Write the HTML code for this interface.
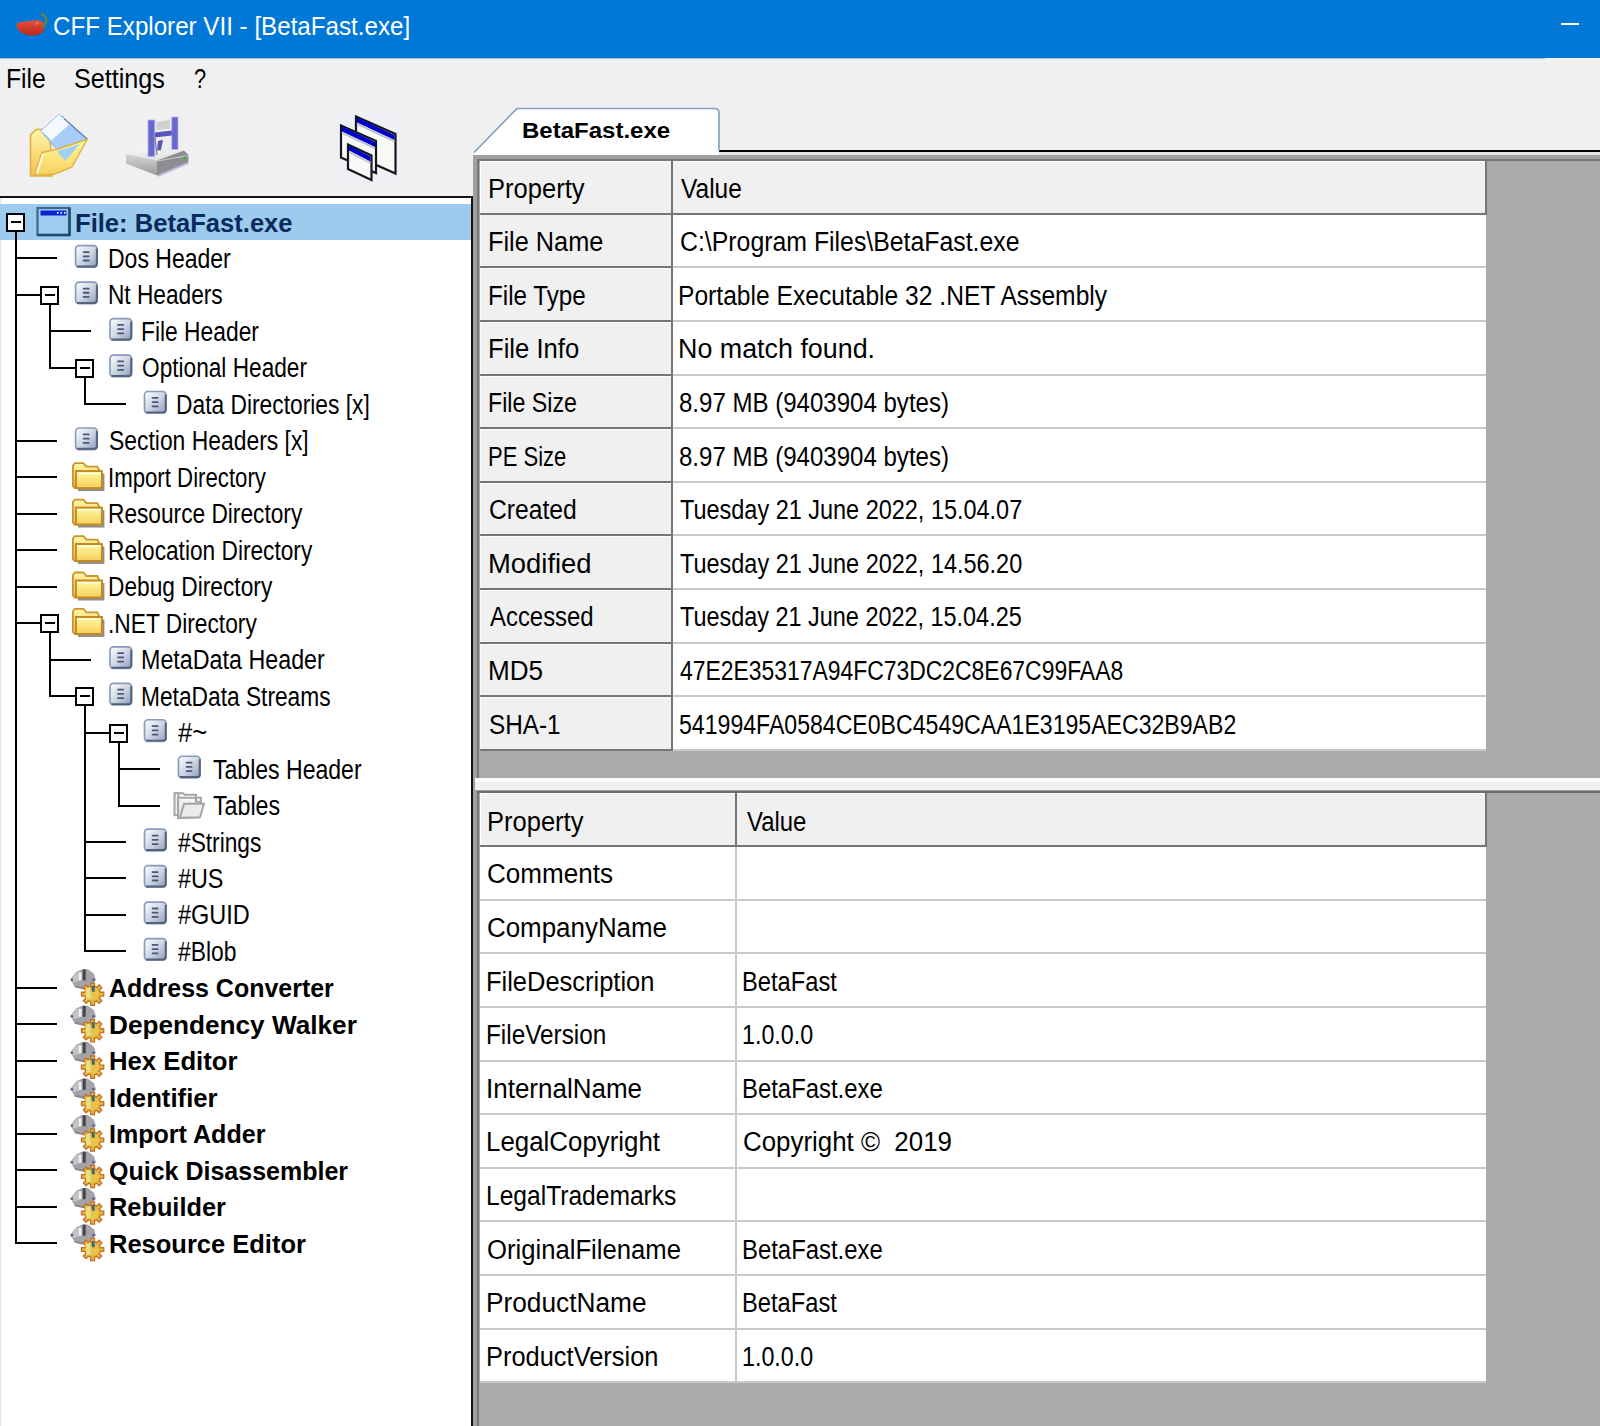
<!DOCTYPE html>
<html><head><meta charset="utf-8"><title>CFF Explorer VII</title>
<style>
html,body{margin:0;padding:0;}
body{width:1600px;height:1426px;overflow:hidden;position:relative;background:#f0f0f0;font-family:"Liberation Sans",sans-serif;}
div,span,svg{position:absolute;box-sizing:border-box;}
span{line-height:1;white-space:pre;transform-origin:0 0;}
</style></head><body>
<div style="left:0px;top:0px;width:1600px;height:58px;background:#0078d7"></div>
<div style="left:0px;top:58px;width:1545px;height:1px;background:#b8bcc8"></div>
<div style="left:0px;top:196px;width:471px;height:1230px;background:#fff"></div>
<div style="left:0px;top:196px;width:473px;height:2px;background:#141414"></div>
<div style="left:471px;top:196px;width:2px;height:1230px;background:#141414"></div>
<div style="left:0px;top:198px;width:1px;height:1228px;background:#e3e3e3"></div>
<div style="left:0px;top:204px;width:471px;height:36px;background:#9ccbee"></div>
<div style="left:719px;top:150px;width:881px;height:2px;background:#000"></div>
<div style="left:719px;top:152px;width:881px;height:3px;background:#e3e3e3"></div>
<div style="left:473px;top:155px;width:1127px;height:1271px;background:#a0a0a0"></div>
<div style="left:477px;top:159px;width:1123px;height:1267px;background:#787878"></div>
<div style="left:479px;top:161px;width:1121px;height:617px;background:#ababab"></div>
<div style="left:479px;top:793px;width:1121px;height:633px;background:#ababab"></div>
<div style="left:475px;top:778px;width:1125px;height:4px;background:#fafafa"></div>
<div style="left:475px;top:782px;width:1125px;height:8px;background:#f0f0f0"></div>
<div style="left:473px;top:790px;width:1127px;height:1px;background:#a0a0a0"></div>
<div style="left:477px;top:791px;width:1123px;height:2px;background:#6e6e6e"></div>
<div style="left:480px;top:215px;width:191px;height:536px;background:#f0f0f0"></div>
<div style="left:671px;top:215px;width:814.5px;height:536px;background:#fff"></div>
<div style="left:480px;top:215px;width:1px;height:534px;background:#fcfcfc"></div>
<div style="left:480px;top:161px;width:1006px;height:52px;background:#f0f0f0"></div>
<div style="left:480px;top:161px;width:1006px;height:1px;background:#fff"></div>
<div style="left:480px;top:161px;width:1px;height:54px;background:#fff"></div>
<div style="left:480px;top:213px;width:1007px;height:2px;background:#767676"></div>
<div style="left:671px;top:161px;width:2px;height:54px;background:#767676"></div>
<div style="left:1485px;top:161px;width:2px;height:54px;background:#767676"></div>
<div style="left:480px;top:266px;width:191px;height:2px;background:#767676"></div>
<div style="left:481px;top:268px;width:190px;height:1px;background:#fcfcfc"></div>
<div style="left:673px;top:266px;width:812.5px;height:2px;background:#c8c8c8"></div>
<div style="left:671px;top:215px;width:2px;height:53px;background:#767676"></div>
<div style="left:480px;top:320px;width:191px;height:2px;background:#767676"></div>
<div style="left:481px;top:322px;width:190px;height:1px;background:#fcfcfc"></div>
<div style="left:673px;top:320px;width:812.5px;height:2px;background:#c8c8c8"></div>
<div style="left:671px;top:268px;width:2px;height:54px;background:#767676"></div>
<div style="left:480px;top:374px;width:191px;height:2px;background:#767676"></div>
<div style="left:481px;top:376px;width:190px;height:1px;background:#fcfcfc"></div>
<div style="left:673px;top:374px;width:812.5px;height:2px;background:#c8c8c8"></div>
<div style="left:671px;top:322px;width:2px;height:54px;background:#767676"></div>
<div style="left:480px;top:427px;width:191px;height:2px;background:#767676"></div>
<div style="left:481px;top:429px;width:190px;height:1px;background:#fcfcfc"></div>
<div style="left:673px;top:427px;width:812.5px;height:2px;background:#c8c8c8"></div>
<div style="left:671px;top:376px;width:2px;height:53px;background:#767676"></div>
<div style="left:480px;top:481px;width:191px;height:2px;background:#767676"></div>
<div style="left:481px;top:483px;width:190px;height:1px;background:#fcfcfc"></div>
<div style="left:673px;top:481px;width:812.5px;height:2px;background:#c8c8c8"></div>
<div style="left:671px;top:429px;width:2px;height:54px;background:#767676"></div>
<div style="left:480px;top:534px;width:191px;height:2px;background:#767676"></div>
<div style="left:481px;top:536px;width:190px;height:1px;background:#fcfcfc"></div>
<div style="left:673px;top:534px;width:812.5px;height:2px;background:#c8c8c8"></div>
<div style="left:671px;top:483px;width:2px;height:53px;background:#767676"></div>
<div style="left:480px;top:588px;width:191px;height:2px;background:#767676"></div>
<div style="left:481px;top:590px;width:190px;height:1px;background:#fcfcfc"></div>
<div style="left:673px;top:588px;width:812.5px;height:2px;background:#c8c8c8"></div>
<div style="left:671px;top:536px;width:2px;height:54px;background:#767676"></div>
<div style="left:480px;top:642px;width:191px;height:2px;background:#767676"></div>
<div style="left:481px;top:644px;width:190px;height:1px;background:#fcfcfc"></div>
<div style="left:673px;top:642px;width:812.5px;height:2px;background:#c8c8c8"></div>
<div style="left:671px;top:590px;width:2px;height:54px;background:#767676"></div>
<div style="left:480px;top:695px;width:191px;height:2px;background:#767676"></div>
<div style="left:481px;top:697px;width:190px;height:1px;background:#fcfcfc"></div>
<div style="left:673px;top:695px;width:812.5px;height:2px;background:#c8c8c8"></div>
<div style="left:671px;top:644px;width:2px;height:53px;background:#767676"></div>
<div style="left:480px;top:749px;width:191px;height:2px;background:#767676"></div>
<div style="left:673px;top:749px;width:812.5px;height:2px;background:#c8c8c8"></div>
<div style="left:671px;top:697px;width:2px;height:54px;background:#767676"></div>
<div style="left:480px;top:847px;width:255px;height:536px;background:#fff"></div>
<div style="left:735px;top:847px;width:750.5px;height:536px;background:#fff"></div>
<div style="left:480px;top:793px;width:1006px;height:52px;background:#f0f0f0"></div>
<div style="left:480px;top:793px;width:1006px;height:1px;background:#fff"></div>
<div style="left:480px;top:793px;width:1px;height:54px;background:#fff"></div>
<div style="left:480px;top:845px;width:1007px;height:2px;background:#767676"></div>
<div style="left:735px;top:793px;width:2px;height:54px;background:#767676"></div>
<div style="left:1485px;top:793px;width:2px;height:54px;background:#767676"></div>
<div style="left:480px;top:899px;width:1005.5px;height:2px;background:#c8c8c8"></div>
<div style="left:735px;top:847px;width:2px;height:52px;background:#c8c8c8"></div>
<div style="left:480px;top:952px;width:1005.5px;height:2px;background:#c8c8c8"></div>
<div style="left:735px;top:901px;width:2px;height:51px;background:#c8c8c8"></div>
<div style="left:480px;top:1006px;width:1005.5px;height:2px;background:#c8c8c8"></div>
<div style="left:735px;top:954px;width:2px;height:52px;background:#c8c8c8"></div>
<div style="left:480px;top:1060px;width:1005.5px;height:2px;background:#c8c8c8"></div>
<div style="left:735px;top:1008px;width:2px;height:52px;background:#c8c8c8"></div>
<div style="left:480px;top:1113px;width:1005.5px;height:2px;background:#c8c8c8"></div>
<div style="left:735px;top:1062px;width:2px;height:51px;background:#c8c8c8"></div>
<div style="left:480px;top:1167px;width:1005.5px;height:2px;background:#c8c8c8"></div>
<div style="left:735px;top:1115px;width:2px;height:52px;background:#c8c8c8"></div>
<div style="left:480px;top:1220px;width:1005.5px;height:2px;background:#c8c8c8"></div>
<div style="left:735px;top:1169px;width:2px;height:51px;background:#c8c8c8"></div>
<div style="left:480px;top:1274px;width:1005.5px;height:2px;background:#c8c8c8"></div>
<div style="left:735px;top:1222px;width:2px;height:52px;background:#c8c8c8"></div>
<div style="left:480px;top:1328px;width:1005.5px;height:2px;background:#c8c8c8"></div>
<div style="left:735px;top:1276px;width:2px;height:52px;background:#c8c8c8"></div>
<div style="left:480px;top:1381px;width:1005.5px;height:2px;background:#c8c8c8"></div>
<div style="left:735px;top:1330px;width:2px;height:51px;background:#c8c8c8"></div>
<div style="left:15px;top:231px;width:2px;height:1013px;background:#000"></div>
<div style="left:49px;top:304px;width:2px;height:65px;background:#000"></div>
<div style="left:84px;top:377px;width:2px;height:28px;background:#000"></div>
<div style="left:49px;top:632px;width:2px;height:65px;background:#000"></div>
<div style="left:84px;top:705px;width:2px;height:247px;background:#000"></div>
<div style="left:118px;top:742px;width:2px;height:65px;background:#000"></div>
<div style="left:15px;top:257px;width:42px;height:2px;background:#000"></div>
<div style="left:15px;top:294px;width:42px;height:2px;background:#000"></div>
<div style="left:49px;top:330px;width:42px;height:2px;background:#000"></div>
<div style="left:49px;top:367px;width:42px;height:2px;background:#000"></div>
<div style="left:84px;top:403px;width:42px;height:2px;background:#000"></div>
<div style="left:15px;top:440px;width:42px;height:2px;background:#000"></div>
<div style="left:15px;top:476px;width:42px;height:2px;background:#000"></div>
<div style="left:15px;top:513px;width:42px;height:2px;background:#000"></div>
<div style="left:15px;top:549px;width:42px;height:2px;background:#000"></div>
<div style="left:15px;top:586px;width:42px;height:2px;background:#000"></div>
<div style="left:15px;top:622px;width:42px;height:2px;background:#000"></div>
<div style="left:49px;top:659px;width:42px;height:2px;background:#000"></div>
<div style="left:49px;top:695px;width:42px;height:2px;background:#000"></div>
<div style="left:84px;top:732px;width:42px;height:2px;background:#000"></div>
<div style="left:118px;top:768px;width:42px;height:2px;background:#000"></div>
<div style="left:118px;top:805px;width:42px;height:2px;background:#000"></div>
<div style="left:84px;top:841px;width:42px;height:2px;background:#000"></div>
<div style="left:84px;top:877px;width:42px;height:2px;background:#000"></div>
<div style="left:84px;top:914px;width:42px;height:2px;background:#000"></div>
<div style="left:84px;top:950px;width:42px;height:2px;background:#000"></div>
<div style="left:15px;top:987px;width:42px;height:2px;background:#000"></div>
<div style="left:15px;top:1023px;width:42px;height:2px;background:#000"></div>
<div style="left:15px;top:1060px;width:42px;height:2px;background:#000"></div>
<div style="left:15px;top:1096px;width:42px;height:2px;background:#000"></div>
<div style="left:15px;top:1133px;width:42px;height:2px;background:#000"></div>
<div style="left:15px;top:1169px;width:42px;height:2px;background:#000"></div>
<div style="left:15px;top:1206px;width:42px;height:2px;background:#000"></div>
<div style="left:15px;top:1242px;width:42px;height:2px;background:#000"></div>
<div style="left:6px;top:213px;width:19px;height:19px;background:#fff;border:2px solid #000"></div>
<div style="left:11px;top:221px;width:10px;height:2px;background:#000"></div>
<div style="left:40px;top:286px;width:19px;height:19px;background:#fff;border:2px solid #000"></div>
<div style="left:45px;top:294px;width:10px;height:2px;background:#000"></div>
<div style="left:75px;top:359px;width:19px;height:19px;background:#fff;border:2px solid #000"></div>
<div style="left:80px;top:367px;width:10px;height:2px;background:#000"></div>
<div style="left:40px;top:614px;width:19px;height:19px;background:#fff;border:2px solid #000"></div>
<div style="left:45px;top:622px;width:10px;height:2px;background:#000"></div>
<div style="left:75px;top:687px;width:19px;height:19px;background:#fff;border:2px solid #000"></div>
<div style="left:80px;top:695px;width:10px;height:2px;background:#000"></div>
<div style="left:109px;top:724px;width:19px;height:19px;background:#fff;border:2px solid #000"></div>
<div style="left:114px;top:732px;width:10px;height:2px;background:#000"></div>
<svg style="left:0;top:0" width="1600" height="1426" viewBox="0 0 1600 1426">
<defs>
 <linearGradient id="docg" x1="0" y1="0" x2="1" y2="1"><stop offset="0" stop-color="#ffffff"/><stop offset="0.55" stop-color="#c9d1e0"/><stop offset="1" stop-color="#8e9cba"/></linearGradient>
 <linearGradient id="foldg" x1="0" y1="0" x2="0" y2="1"><stop offset="0" stop-color="#fffaa0"/><stop offset="1" stop-color="#f7cf5c"/></linearGradient>
 <linearGradient id="foldb" x1="0" y1="0" x2="0" y2="1"><stop offset="0" stop-color="#fff7a8"/><stop offset="1" stop-color="#f5c050"/></linearGradient>
 <linearGradient id="grayf" x1="0" y1="0" x2="0" y2="1"><stop offset="0" stop-color="#f6f6f6"/><stop offset="1" stop-color="#dcdcdc"/></linearGradient>
 <linearGradient id="blueg" x1="0" y1="0" x2="1" y2="1"><stop offset="0" stop-color="#ffffff"/><stop offset="1" stop-color="#8fbdf5"/></linearGradient>
 <linearGradient id="chili" x1="0" y1="0" x2="0" y2="1"><stop offset="0" stop-color="#e8503c"/><stop offset="1" stop-color="#b8261a"/></linearGradient>
 
 
 
 
</defs>
<path d="M16.5,25 C17,21.5 25,21.5 34,20.5 C40,19.5 44.5,21 44.5,27 C44.5,33 39,35.5 32,35.5 C24,35.5 16.5,31 16.5,25 Z" fill="url(#chili)"/>
<path d="M42,27 C47,24 49,18 41,13.5" fill="none" stroke="#5a8a3a" stroke-width="2.4"/>
<ellipse cx="37" cy="23.5" rx="2" ry="1.3" fill="#f08070" opacity=".7"/>
<rect x="1561" y="23" width="18" height="2" fill="#fff"/>
<path d="M30.5,135 L36,129.5 L45,129.5 L50,134 L52,176 L30.5,176 Z" fill="url(#foldb)" stroke="#deb040" stroke-width="1.6"/>
<path d="M41,131 L59,114.5 L87,139 L56,148 Z" fill="url(#blueg)" stroke="#8ab4e8" stroke-width="1.2"/>
<path d="M57,116 L64,116 L60,120 Z" fill="#3a9af5"/>
<path d="M41,131 L59,114.5 L70,124 L52,140 Z" fill="#f4f8ff"/>
<path d="M52,140 L70,124 L87,139 L56,148 Z" fill="#a9cdf9"/>
<path d="M64,118.5 L87,139" stroke="#6a88a8" stroke-width="1.5"/>
<path d="M42,152.5 L58,149 L87,139.5 L72,167 L55,174 L34.5,175.5 Z" fill="url(#foldg)" stroke="#e0b444" stroke-width="1.5"/>
<path d="M57,151 L80,144 L65,161 Z" fill="#9fd0f8"/>
<path d="M43,154 L37,173" stroke="#fffce0" stroke-width="2"/>
<defs><linearGradient id="drvtop" x1="0" y1="0" x2="0.3" y2="1"><stop offset="0" stop-color="#fafafa"/><stop offset="1" stop-color="#e2e2e2"/></linearGradient><linearGradient id="drvl" x1="0" y1="0" x2="0" y2="1"><stop offset="0" stop-color="#d8d8d8"/><stop offset="1" stop-color="#9a9a9a"/></linearGradient></defs>
<path d="M126,154 L148,146.5 L184,150.5 L157,160.5 Z" fill="url(#drvtop)"/>
<path d="M126,154 L157,160.5 L157,175.5 L126,163.5 Z" fill="url(#drvl)"/>
<path d="M157,160.5 L184,150.5 L188.5,155 L188.5,162 L157,175.5 Z" fill="#8e8e92"/>
<path d="M157,161 L188.5,155.5" stroke="#c8c8c8" stroke-width="1.2"/>
<path d="M158,176 L188.5,163" stroke="#a8a8e0" stroke-width="1.5" opacity=".8"/>
<circle cx="185" cy="158" r="1.4" fill="#40b030"/>
<path d="M148,120 L178,116.5 L178,150 L155,156.5 L148,156.5 Z" fill="#ededed"/>
<rect x="148" y="120" width="6.8" height="36.5" fill="#6a68cc" stroke="#b0b0ff" stroke-width=".8"/>
<rect x="171.8" y="117" width="6.2" height="32.5" fill="#6a68cc" stroke="#b0b0ff" stroke-width=".8"/>
<path d="M154.8,132.5 L171.8,130.5 L171.8,135.5 L154.8,137.5 Z" fill="#5856bc"/>
<path d="M158,141 L163,139.8 L161,150 L157,150.5 Z" fill="#5856bc"/>
<path d="M156.5,122 L170,120 L170,128.5 L156.5,130 Z" fill="#d0d0d0"/>
<path d="M155,138 L157,155" stroke="#505050" stroke-width="1.2" opacity=".7"/>
<rect x="333.5" y="113.5" width="69.5" height="69" fill="#eef0f6"/>
<path d="M356,116.5 L395.5,134 L395.5,173.5 L356,156.0 Z" fill="#f8faf8" stroke="#16181c" stroke-width="2.2"/><path d="M357,117.5 L394.5,135 L394.5,140 L357,122.5 Z" fill="#0000cc"/><path d="M357,124.0 L394.5,141.5" stroke="#c0c0c0" stroke-width="1.6"/>
<path d="M341,125.5 L376,141 L376,173 L341,157.5 Z" fill="#f8faf8" stroke="#16181c" stroke-width="2.2"/><path d="M342,126.5 L375,142 L375,147 L342,131.5 Z" fill="#0000cc"/><path d="M342,133.0 L375,148.5" stroke="#c0c0c0" stroke-width="1.6"/>
<path d="M348,144.5 L371.5,155.5 L371.5,180.0 L348,169.0 Z" fill="#f8faf8" stroke="#16181c" stroke-width="2.2"/><path d="M349,145.5 L370.5,156.5 L370.5,161.5 L349,150.5 Z" fill="#0000cc"/><path d="M349,152.0 L370.5,163.0" stroke="#c0c0c0" stroke-width="1.6"/>
<path d="M474,155 L474,152.5 L517,108.5 L714.5,108.5 Q719,108.5 719,113 L719,155 Z" fill="#fff"/>
<path d="M474,152.5 L517,108.5 L714.5,108.5 Q719,108.5 719,113 L719,151" fill="none" stroke="#7e9fc0" stroke-width="1.6"/>
<rect x="37.5" y="208" width="32" height="27" fill="#9fcbee" stroke="#3a6890" stroke-width="2.2"/>
<path d="M37.5,235 L69.5,235 L69.5,208" fill="none" stroke="#1e4a70" stroke-width="2.4"/>
<rect x="40.5" y="210.5" width="26" height="5" fill="#0a24d2"/>
<rect x="57" y="212" width="1.6" height="1.6" fill="#fff"/>
<rect x="60.5" y="212" width="1.6" height="1.6" fill="#fff"/>
<rect x="64" y="212" width="1.6" height="1.6" fill="#fff"/>
<g transform="translate(74.60,244.67) scale(0.9833,0.9833)">
  <rect x="1" y="1" width="22" height="22" rx="3.5" fill="url(#docg)" stroke="#8a9aba" stroke-width="1.7"/>
  <path d="M2.5,22.2 L20,22.2 Q22.6,22.2 22.6,19.5 L22.6,4" fill="none" stroke="#52627f" stroke-width="2"/>
  <rect x="8.3" y="6.6" width="7" height="1.8" rx=".9" fill="#4a5878"/>
  <rect x="8.3" y="10.9" width="7" height="1.8" rx=".9" fill="#4a5878"/>
  <rect x="8.3" y="15.2" width="7" height="1.8" rx=".9" fill="#4a5878"/>
 </g>
<g transform="translate(74.60,281.14) scale(0.9833,0.9833)">
  <rect x="1" y="1" width="22" height="22" rx="3.5" fill="url(#docg)" stroke="#8a9aba" stroke-width="1.7"/>
  <path d="M2.5,22.2 L20,22.2 Q22.6,22.2 22.6,19.5 L22.6,4" fill="none" stroke="#52627f" stroke-width="2"/>
  <rect x="8.3" y="6.6" width="7" height="1.8" rx=".9" fill="#4a5878"/>
  <rect x="8.3" y="10.9" width="7" height="1.8" rx=".9" fill="#4a5878"/>
  <rect x="8.3" y="15.2" width="7" height="1.8" rx=".9" fill="#4a5878"/>
 </g>
<g transform="translate(109.00,317.61) scale(0.9833,0.9833)">
  <rect x="1" y="1" width="22" height="22" rx="3.5" fill="url(#docg)" stroke="#8a9aba" stroke-width="1.7"/>
  <path d="M2.5,22.2 L20,22.2 Q22.6,22.2 22.6,19.5 L22.6,4" fill="none" stroke="#52627f" stroke-width="2"/>
  <rect x="8.3" y="6.6" width="7" height="1.8" rx=".9" fill="#4a5878"/>
  <rect x="8.3" y="10.9" width="7" height="1.8" rx=".9" fill="#4a5878"/>
  <rect x="8.3" y="15.2" width="7" height="1.8" rx=".9" fill="#4a5878"/>
 </g>
<g transform="translate(109.00,354.08) scale(0.9833,0.9833)">
  <rect x="1" y="1" width="22" height="22" rx="3.5" fill="url(#docg)" stroke="#8a9aba" stroke-width="1.7"/>
  <path d="M2.5,22.2 L20,22.2 Q22.6,22.2 22.6,19.5 L22.6,4" fill="none" stroke="#52627f" stroke-width="2"/>
  <rect x="8.3" y="6.6" width="7" height="1.8" rx=".9" fill="#4a5878"/>
  <rect x="8.3" y="10.9" width="7" height="1.8" rx=".9" fill="#4a5878"/>
  <rect x="8.3" y="15.2" width="7" height="1.8" rx=".9" fill="#4a5878"/>
 </g>
<g transform="translate(143.50,390.55) scale(0.9833,0.9833)">
  <rect x="1" y="1" width="22" height="22" rx="3.5" fill="url(#docg)" stroke="#8a9aba" stroke-width="1.7"/>
  <path d="M2.5,22.2 L20,22.2 Q22.6,22.2 22.6,19.5 L22.6,4" fill="none" stroke="#52627f" stroke-width="2"/>
  <rect x="8.3" y="6.6" width="7" height="1.8" rx=".9" fill="#4a5878"/>
  <rect x="8.3" y="10.9" width="7" height="1.8" rx=".9" fill="#4a5878"/>
  <rect x="8.3" y="15.2" width="7" height="1.8" rx=".9" fill="#4a5878"/>
 </g>
<g transform="translate(74.60,427.02) scale(0.9833,0.9833)">
  <rect x="1" y="1" width="22" height="22" rx="3.5" fill="url(#docg)" stroke="#8a9aba" stroke-width="1.7"/>
  <path d="M2.5,22.2 L20,22.2 Q22.6,22.2 22.6,19.5 L22.6,4" fill="none" stroke="#52627f" stroke-width="2"/>
  <rect x="8.3" y="6.6" width="7" height="1.8" rx=".9" fill="#4a5878"/>
  <rect x="8.3" y="10.9" width="7" height="1.8" rx=".9" fill="#4a5878"/>
  <rect x="8.3" y="15.2" width="7" height="1.8" rx=".9" fill="#4a5878"/>
 </g>
<g transform="translate(70.40,461.59) scale(1.0000,1.0000)">
  <path d="M2.5,4 L4.5,1.5 L13,1.5 L16,5 L27,5 L28.5,8 L28.5,12 L4.5,26.5 L2.5,24.5 Z" fill="url(#foldb)" stroke="#c9952c" stroke-width="1.8"/>
  <rect x="7.5" y="12" width="26.5" height="17.5" fill="#444" opacity=".6"/>
  <rect x="5.5" y="9.5" width="26" height="17" fill="url(#foldg)" stroke="#c48a22" stroke-width="2"/>
  <rect x="6.5" y="11" width="24" height="1.5" fill="#fffde8"/>
 </g>
<g transform="translate(70.40,498.06) scale(1.0000,1.0000)">
  <path d="M2.5,4 L4.5,1.5 L13,1.5 L16,5 L27,5 L28.5,8 L28.5,12 L4.5,26.5 L2.5,24.5 Z" fill="url(#foldb)" stroke="#c9952c" stroke-width="1.8"/>
  <rect x="7.5" y="12" width="26.5" height="17.5" fill="#444" opacity=".6"/>
  <rect x="5.5" y="9.5" width="26" height="17" fill="url(#foldg)" stroke="#c48a22" stroke-width="2"/>
  <rect x="6.5" y="11" width="24" height="1.5" fill="#fffde8"/>
 </g>
<g transform="translate(70.40,534.53) scale(1.0000,1.0000)">
  <path d="M2.5,4 L4.5,1.5 L13,1.5 L16,5 L27,5 L28.5,8 L28.5,12 L4.5,26.5 L2.5,24.5 Z" fill="url(#foldb)" stroke="#c9952c" stroke-width="1.8"/>
  <rect x="7.5" y="12" width="26.5" height="17.5" fill="#444" opacity=".6"/>
  <rect x="5.5" y="9.5" width="26" height="17" fill="url(#foldg)" stroke="#c48a22" stroke-width="2"/>
  <rect x="6.5" y="11" width="24" height="1.5" fill="#fffde8"/>
 </g>
<g transform="translate(70.40,571.00) scale(1.0000,1.0000)">
  <path d="M2.5,4 L4.5,1.5 L13,1.5 L16,5 L27,5 L28.5,8 L28.5,12 L4.5,26.5 L2.5,24.5 Z" fill="url(#foldb)" stroke="#c9952c" stroke-width="1.8"/>
  <rect x="7.5" y="12" width="26.5" height="17.5" fill="#444" opacity=".6"/>
  <rect x="5.5" y="9.5" width="26" height="17" fill="url(#foldg)" stroke="#c48a22" stroke-width="2"/>
  <rect x="6.5" y="11" width="24" height="1.5" fill="#fffde8"/>
 </g>
<g transform="translate(70.40,607.47) scale(1.0000,1.0000)">
  <path d="M2.5,4 L4.5,1.5 L13,1.5 L16,5 L27,5 L28.5,8 L28.5,12 L4.5,26.5 L2.5,24.5 Z" fill="url(#foldb)" stroke="#c9952c" stroke-width="1.8"/>
  <rect x="7.5" y="12" width="26.5" height="17.5" fill="#444" opacity=".6"/>
  <rect x="5.5" y="9.5" width="26" height="17" fill="url(#foldg)" stroke="#c48a22" stroke-width="2"/>
  <rect x="6.5" y="11" width="24" height="1.5" fill="#fffde8"/>
 </g>
<g transform="translate(109.00,645.84) scale(0.9833,0.9833)">
  <rect x="1" y="1" width="22" height="22" rx="3.5" fill="url(#docg)" stroke="#8a9aba" stroke-width="1.7"/>
  <path d="M2.5,22.2 L20,22.2 Q22.6,22.2 22.6,19.5 L22.6,4" fill="none" stroke="#52627f" stroke-width="2"/>
  <rect x="8.3" y="6.6" width="7" height="1.8" rx=".9" fill="#4a5878"/>
  <rect x="8.3" y="10.9" width="7" height="1.8" rx=".9" fill="#4a5878"/>
  <rect x="8.3" y="15.2" width="7" height="1.8" rx=".9" fill="#4a5878"/>
 </g>
<g transform="translate(109.00,682.31) scale(0.9833,0.9833)">
  <rect x="1" y="1" width="22" height="22" rx="3.5" fill="url(#docg)" stroke="#8a9aba" stroke-width="1.7"/>
  <path d="M2.5,22.2 L20,22.2 Q22.6,22.2 22.6,19.5 L22.6,4" fill="none" stroke="#52627f" stroke-width="2"/>
  <rect x="8.3" y="6.6" width="7" height="1.8" rx=".9" fill="#4a5878"/>
  <rect x="8.3" y="10.9" width="7" height="1.8" rx=".9" fill="#4a5878"/>
  <rect x="8.3" y="15.2" width="7" height="1.8" rx=".9" fill="#4a5878"/>
 </g>
<g transform="translate(143.50,718.78) scale(0.9833,0.9833)">
  <rect x="1" y="1" width="22" height="22" rx="3.5" fill="url(#docg)" stroke="#8a9aba" stroke-width="1.7"/>
  <path d="M2.5,22.2 L20,22.2 Q22.6,22.2 22.6,19.5 L22.6,4" fill="none" stroke="#52627f" stroke-width="2"/>
  <rect x="8.3" y="6.6" width="7" height="1.8" rx=".9" fill="#4a5878"/>
  <rect x="8.3" y="10.9" width="7" height="1.8" rx=".9" fill="#4a5878"/>
  <rect x="8.3" y="15.2" width="7" height="1.8" rx=".9" fill="#4a5878"/>
 </g>
<g transform="translate(177.50,755.25) scale(0.9833,0.9833)">
  <rect x="1" y="1" width="22" height="22" rx="3.5" fill="url(#docg)" stroke="#8a9aba" stroke-width="1.7"/>
  <path d="M2.5,22.2 L20,22.2 Q22.6,22.2 22.6,19.5 L22.6,4" fill="none" stroke="#52627f" stroke-width="2"/>
  <rect x="8.3" y="6.6" width="7" height="1.8" rx=".9" fill="#4a5878"/>
  <rect x="8.3" y="10.9" width="7" height="1.8" rx=".9" fill="#4a5878"/>
  <rect x="8.3" y="15.2" width="7" height="1.8" rx=".9" fill="#4a5878"/>
 </g>
<g transform="translate(173.00,791.72) scale(1.0000,1.0000)">
  <path d="M1.5,1.5 L10,1.5 L11.5,3 L23,3 L23,6 L28,6 L28,11" fill="none" stroke="#a6a6a6" stroke-width="2"/>
  <rect x="1.5" y="1.5" width="4" height="22" fill="#f2f2f2" stroke="#a6a6a6" stroke-width="2"/>
  <path d="M5,6 L23,6 L23,10 L28,10 L28,18 L26,25.5 L5,26.5 Z" fill="url(#grayf)" stroke="#a6a6a6" stroke-width="2"/>
  <path d="M7,26 L11,12 L31,12 L27,25.5 Z" fill="#ebebeb" stroke="#a6a6a6" stroke-width="2"/>
 </g>
<g transform="translate(143.50,828.19) scale(0.9833,0.9833)">
  <rect x="1" y="1" width="22" height="22" rx="3.5" fill="url(#docg)" stroke="#8a9aba" stroke-width="1.7"/>
  <path d="M2.5,22.2 L20,22.2 Q22.6,22.2 22.6,19.5 L22.6,4" fill="none" stroke="#52627f" stroke-width="2"/>
  <rect x="8.3" y="6.6" width="7" height="1.8" rx=".9" fill="#4a5878"/>
  <rect x="8.3" y="10.9" width="7" height="1.8" rx=".9" fill="#4a5878"/>
  <rect x="8.3" y="15.2" width="7" height="1.8" rx=".9" fill="#4a5878"/>
 </g>
<g transform="translate(143.50,864.66) scale(0.9833,0.9833)">
  <rect x="1" y="1" width="22" height="22" rx="3.5" fill="url(#docg)" stroke="#8a9aba" stroke-width="1.7"/>
  <path d="M2.5,22.2 L20,22.2 Q22.6,22.2 22.6,19.5 L22.6,4" fill="none" stroke="#52627f" stroke-width="2"/>
  <rect x="8.3" y="6.6" width="7" height="1.8" rx=".9" fill="#4a5878"/>
  <rect x="8.3" y="10.9" width="7" height="1.8" rx=".9" fill="#4a5878"/>
  <rect x="8.3" y="15.2" width="7" height="1.8" rx=".9" fill="#4a5878"/>
 </g>
<g transform="translate(143.50,901.13) scale(0.9833,0.9833)">
  <rect x="1" y="1" width="22" height="22" rx="3.5" fill="url(#docg)" stroke="#8a9aba" stroke-width="1.7"/>
  <path d="M2.5,22.2 L20,22.2 Q22.6,22.2 22.6,19.5 L22.6,4" fill="none" stroke="#52627f" stroke-width="2"/>
  <rect x="8.3" y="6.6" width="7" height="1.8" rx=".9" fill="#4a5878"/>
  <rect x="8.3" y="10.9" width="7" height="1.8" rx=".9" fill="#4a5878"/>
  <rect x="8.3" y="15.2" width="7" height="1.8" rx=".9" fill="#4a5878"/>
 </g>
<g transform="translate(143.50,937.60) scale(0.9833,0.9833)">
  <rect x="1" y="1" width="22" height="22" rx="3.5" fill="url(#docg)" stroke="#8a9aba" stroke-width="1.7"/>
  <path d="M2.5,22.2 L20,22.2 Q22.6,22.2 22.6,19.5 L22.6,4" fill="none" stroke="#52627f" stroke-width="2"/>
  <rect x="8.3" y="6.6" width="7" height="1.8" rx=".9" fill="#4a5878"/>
  <rect x="8.3" y="10.9" width="7" height="1.8" rx=".9" fill="#4a5878"/>
  <rect x="8.3" y="15.2" width="7" height="1.8" rx=".9" fill="#4a5878"/>
 </g>
<g transform="translate(70.40,968.87) scale(1.0000,1.0000)">
  <path d="M0,10.5 L6,3 L12,0.3 L17.5,0.3 L23.5,5 L25.5,11 L21,17.5 L13,19.8 L4.5,18.3 Z" fill="#a4a4a8"/>
  <path d="M1,11 L6,4 L9,3 L9.5,12 L3,14 Z" fill="#c4c4c4"/>
  <rect x="8.5" y="3.5" width="2.6" height="8" fill="#f2f2ea"/>
  <rect x="12.3" y="0.5" width="3" height="11" fill="#44444c"/>
  <path d="M4.5,17.5 L13,19.5 L21,17.3" fill="none" stroke="#8a8a90" stroke-width="2"/>
  <circle cx="1.5" cy="11" r="1.3" fill="#5a5a90"/>
  <circle cx="23" cy="11" r="1.3" fill="#5a5a90"/>
  <path d="M29.97,23.40 L33.34,23.39 L33.34,27.21 L29.97,27.20 L29.04,29.45 L31.43,31.82 L28.72,34.53 L26.35,32.14 L24.10,33.07 L24.11,36.44 L20.29,36.44 L20.30,33.07 L18.05,32.14 L15.68,34.53 L12.97,31.82 L15.36,29.45 L14.43,27.20 L11.06,27.21 L11.06,23.39 L14.43,23.40 L15.36,21.15 L12.97,18.78 L15.68,16.07 L18.05,18.46 L20.30,17.53 L20.29,14.16 L24.11,14.16 L24.10,17.53 L26.35,18.46 L28.72,16.07 L31.43,18.78 L29.04,21.15 Z" fill="#e2b83c" stroke="#c66e24" stroke-width="1.3"/>
  <circle cx="22.2" cy="25.3" r="6.2" fill="#e8c24a"/>
  <path d="M15,20 L19.5,18 L20.5,30 L16,31 Z" fill="#e8e080"/>
  <path d="M21,17 L24,17 L24.5,23 L21.5,23 Z" fill="#3f6a70"/>
 </g>
<g transform="translate(70.40,1005.34) scale(1.0000,1.0000)">
  <path d="M0,10.5 L6,3 L12,0.3 L17.5,0.3 L23.5,5 L25.5,11 L21,17.5 L13,19.8 L4.5,18.3 Z" fill="#a4a4a8"/>
  <path d="M1,11 L6,4 L9,3 L9.5,12 L3,14 Z" fill="#c4c4c4"/>
  <rect x="8.5" y="3.5" width="2.6" height="8" fill="#f2f2ea"/>
  <rect x="12.3" y="0.5" width="3" height="11" fill="#44444c"/>
  <path d="M4.5,17.5 L13,19.5 L21,17.3" fill="none" stroke="#8a8a90" stroke-width="2"/>
  <circle cx="1.5" cy="11" r="1.3" fill="#5a5a90"/>
  <circle cx="23" cy="11" r="1.3" fill="#5a5a90"/>
  <path d="M29.97,23.40 L33.34,23.39 L33.34,27.21 L29.97,27.20 L29.04,29.45 L31.43,31.82 L28.72,34.53 L26.35,32.14 L24.10,33.07 L24.11,36.44 L20.29,36.44 L20.30,33.07 L18.05,32.14 L15.68,34.53 L12.97,31.82 L15.36,29.45 L14.43,27.20 L11.06,27.21 L11.06,23.39 L14.43,23.40 L15.36,21.15 L12.97,18.78 L15.68,16.07 L18.05,18.46 L20.30,17.53 L20.29,14.16 L24.11,14.16 L24.10,17.53 L26.35,18.46 L28.72,16.07 L31.43,18.78 L29.04,21.15 Z" fill="#e2b83c" stroke="#c66e24" stroke-width="1.3"/>
  <circle cx="22.2" cy="25.3" r="6.2" fill="#e8c24a"/>
  <path d="M15,20 L19.5,18 L20.5,30 L16,31 Z" fill="#e8e080"/>
  <path d="M21,17 L24,17 L24.5,23 L21.5,23 Z" fill="#3f6a70"/>
 </g>
<g transform="translate(70.40,1041.81) scale(1.0000,1.0000)">
  <path d="M0,10.5 L6,3 L12,0.3 L17.5,0.3 L23.5,5 L25.5,11 L21,17.5 L13,19.8 L4.5,18.3 Z" fill="#a4a4a8"/>
  <path d="M1,11 L6,4 L9,3 L9.5,12 L3,14 Z" fill="#c4c4c4"/>
  <rect x="8.5" y="3.5" width="2.6" height="8" fill="#f2f2ea"/>
  <rect x="12.3" y="0.5" width="3" height="11" fill="#44444c"/>
  <path d="M4.5,17.5 L13,19.5 L21,17.3" fill="none" stroke="#8a8a90" stroke-width="2"/>
  <circle cx="1.5" cy="11" r="1.3" fill="#5a5a90"/>
  <circle cx="23" cy="11" r="1.3" fill="#5a5a90"/>
  <path d="M29.97,23.40 L33.34,23.39 L33.34,27.21 L29.97,27.20 L29.04,29.45 L31.43,31.82 L28.72,34.53 L26.35,32.14 L24.10,33.07 L24.11,36.44 L20.29,36.44 L20.30,33.07 L18.05,32.14 L15.68,34.53 L12.97,31.82 L15.36,29.45 L14.43,27.20 L11.06,27.21 L11.06,23.39 L14.43,23.40 L15.36,21.15 L12.97,18.78 L15.68,16.07 L18.05,18.46 L20.30,17.53 L20.29,14.16 L24.11,14.16 L24.10,17.53 L26.35,18.46 L28.72,16.07 L31.43,18.78 L29.04,21.15 Z" fill="#e2b83c" stroke="#c66e24" stroke-width="1.3"/>
  <circle cx="22.2" cy="25.3" r="6.2" fill="#e8c24a"/>
  <path d="M15,20 L19.5,18 L20.5,30 L16,31 Z" fill="#e8e080"/>
  <path d="M21,17 L24,17 L24.5,23 L21.5,23 Z" fill="#3f6a70"/>
 </g>
<g transform="translate(70.40,1078.28) scale(1.0000,1.0000)">
  <path d="M0,10.5 L6,3 L12,0.3 L17.5,0.3 L23.5,5 L25.5,11 L21,17.5 L13,19.8 L4.5,18.3 Z" fill="#a4a4a8"/>
  <path d="M1,11 L6,4 L9,3 L9.5,12 L3,14 Z" fill="#c4c4c4"/>
  <rect x="8.5" y="3.5" width="2.6" height="8" fill="#f2f2ea"/>
  <rect x="12.3" y="0.5" width="3" height="11" fill="#44444c"/>
  <path d="M4.5,17.5 L13,19.5 L21,17.3" fill="none" stroke="#8a8a90" stroke-width="2"/>
  <circle cx="1.5" cy="11" r="1.3" fill="#5a5a90"/>
  <circle cx="23" cy="11" r="1.3" fill="#5a5a90"/>
  <path d="M29.97,23.40 L33.34,23.39 L33.34,27.21 L29.97,27.20 L29.04,29.45 L31.43,31.82 L28.72,34.53 L26.35,32.14 L24.10,33.07 L24.11,36.44 L20.29,36.44 L20.30,33.07 L18.05,32.14 L15.68,34.53 L12.97,31.82 L15.36,29.45 L14.43,27.20 L11.06,27.21 L11.06,23.39 L14.43,23.40 L15.36,21.15 L12.97,18.78 L15.68,16.07 L18.05,18.46 L20.30,17.53 L20.29,14.16 L24.11,14.16 L24.10,17.53 L26.35,18.46 L28.72,16.07 L31.43,18.78 L29.04,21.15 Z" fill="#e2b83c" stroke="#c66e24" stroke-width="1.3"/>
  <circle cx="22.2" cy="25.3" r="6.2" fill="#e8c24a"/>
  <path d="M15,20 L19.5,18 L20.5,30 L16,31 Z" fill="#e8e080"/>
  <path d="M21,17 L24,17 L24.5,23 L21.5,23 Z" fill="#3f6a70"/>
 </g>
<g transform="translate(70.40,1114.75) scale(1.0000,1.0000)">
  <path d="M0,10.5 L6,3 L12,0.3 L17.5,0.3 L23.5,5 L25.5,11 L21,17.5 L13,19.8 L4.5,18.3 Z" fill="#a4a4a8"/>
  <path d="M1,11 L6,4 L9,3 L9.5,12 L3,14 Z" fill="#c4c4c4"/>
  <rect x="8.5" y="3.5" width="2.6" height="8" fill="#f2f2ea"/>
  <rect x="12.3" y="0.5" width="3" height="11" fill="#44444c"/>
  <path d="M4.5,17.5 L13,19.5 L21,17.3" fill="none" stroke="#8a8a90" stroke-width="2"/>
  <circle cx="1.5" cy="11" r="1.3" fill="#5a5a90"/>
  <circle cx="23" cy="11" r="1.3" fill="#5a5a90"/>
  <path d="M29.97,23.40 L33.34,23.39 L33.34,27.21 L29.97,27.20 L29.04,29.45 L31.43,31.82 L28.72,34.53 L26.35,32.14 L24.10,33.07 L24.11,36.44 L20.29,36.44 L20.30,33.07 L18.05,32.14 L15.68,34.53 L12.97,31.82 L15.36,29.45 L14.43,27.20 L11.06,27.21 L11.06,23.39 L14.43,23.40 L15.36,21.15 L12.97,18.78 L15.68,16.07 L18.05,18.46 L20.30,17.53 L20.29,14.16 L24.11,14.16 L24.10,17.53 L26.35,18.46 L28.72,16.07 L31.43,18.78 L29.04,21.15 Z" fill="#e2b83c" stroke="#c66e24" stroke-width="1.3"/>
  <circle cx="22.2" cy="25.3" r="6.2" fill="#e8c24a"/>
  <path d="M15,20 L19.5,18 L20.5,30 L16,31 Z" fill="#e8e080"/>
  <path d="M21,17 L24,17 L24.5,23 L21.5,23 Z" fill="#3f6a70"/>
 </g>
<g transform="translate(70.40,1151.22) scale(1.0000,1.0000)">
  <path d="M0,10.5 L6,3 L12,0.3 L17.5,0.3 L23.5,5 L25.5,11 L21,17.5 L13,19.8 L4.5,18.3 Z" fill="#a4a4a8"/>
  <path d="M1,11 L6,4 L9,3 L9.5,12 L3,14 Z" fill="#c4c4c4"/>
  <rect x="8.5" y="3.5" width="2.6" height="8" fill="#f2f2ea"/>
  <rect x="12.3" y="0.5" width="3" height="11" fill="#44444c"/>
  <path d="M4.5,17.5 L13,19.5 L21,17.3" fill="none" stroke="#8a8a90" stroke-width="2"/>
  <circle cx="1.5" cy="11" r="1.3" fill="#5a5a90"/>
  <circle cx="23" cy="11" r="1.3" fill="#5a5a90"/>
  <path d="M29.97,23.40 L33.34,23.39 L33.34,27.21 L29.97,27.20 L29.04,29.45 L31.43,31.82 L28.72,34.53 L26.35,32.14 L24.10,33.07 L24.11,36.44 L20.29,36.44 L20.30,33.07 L18.05,32.14 L15.68,34.53 L12.97,31.82 L15.36,29.45 L14.43,27.20 L11.06,27.21 L11.06,23.39 L14.43,23.40 L15.36,21.15 L12.97,18.78 L15.68,16.07 L18.05,18.46 L20.30,17.53 L20.29,14.16 L24.11,14.16 L24.10,17.53 L26.35,18.46 L28.72,16.07 L31.43,18.78 L29.04,21.15 Z" fill="#e2b83c" stroke="#c66e24" stroke-width="1.3"/>
  <circle cx="22.2" cy="25.3" r="6.2" fill="#e8c24a"/>
  <path d="M15,20 L19.5,18 L20.5,30 L16,31 Z" fill="#e8e080"/>
  <path d="M21,17 L24,17 L24.5,23 L21.5,23 Z" fill="#3f6a70"/>
 </g>
<g transform="translate(70.40,1187.69) scale(1.0000,1.0000)">
  <path d="M0,10.5 L6,3 L12,0.3 L17.5,0.3 L23.5,5 L25.5,11 L21,17.5 L13,19.8 L4.5,18.3 Z" fill="#a4a4a8"/>
  <path d="M1,11 L6,4 L9,3 L9.5,12 L3,14 Z" fill="#c4c4c4"/>
  <rect x="8.5" y="3.5" width="2.6" height="8" fill="#f2f2ea"/>
  <rect x="12.3" y="0.5" width="3" height="11" fill="#44444c"/>
  <path d="M4.5,17.5 L13,19.5 L21,17.3" fill="none" stroke="#8a8a90" stroke-width="2"/>
  <circle cx="1.5" cy="11" r="1.3" fill="#5a5a90"/>
  <circle cx="23" cy="11" r="1.3" fill="#5a5a90"/>
  <path d="M29.97,23.40 L33.34,23.39 L33.34,27.21 L29.97,27.20 L29.04,29.45 L31.43,31.82 L28.72,34.53 L26.35,32.14 L24.10,33.07 L24.11,36.44 L20.29,36.44 L20.30,33.07 L18.05,32.14 L15.68,34.53 L12.97,31.82 L15.36,29.45 L14.43,27.20 L11.06,27.21 L11.06,23.39 L14.43,23.40 L15.36,21.15 L12.97,18.78 L15.68,16.07 L18.05,18.46 L20.30,17.53 L20.29,14.16 L24.11,14.16 L24.10,17.53 L26.35,18.46 L28.72,16.07 L31.43,18.78 L29.04,21.15 Z" fill="#e2b83c" stroke="#c66e24" stroke-width="1.3"/>
  <circle cx="22.2" cy="25.3" r="6.2" fill="#e8c24a"/>
  <path d="M15,20 L19.5,18 L20.5,30 L16,31 Z" fill="#e8e080"/>
  <path d="M21,17 L24,17 L24.5,23 L21.5,23 Z" fill="#3f6a70"/>
 </g>
<g transform="translate(70.40,1224.16) scale(1.0000,1.0000)">
  <path d="M0,10.5 L6,3 L12,0.3 L17.5,0.3 L23.5,5 L25.5,11 L21,17.5 L13,19.8 L4.5,18.3 Z" fill="#a4a4a8"/>
  <path d="M1,11 L6,4 L9,3 L9.5,12 L3,14 Z" fill="#c4c4c4"/>
  <rect x="8.5" y="3.5" width="2.6" height="8" fill="#f2f2ea"/>
  <rect x="12.3" y="0.5" width="3" height="11" fill="#44444c"/>
  <path d="M4.5,17.5 L13,19.5 L21,17.3" fill="none" stroke="#8a8a90" stroke-width="2"/>
  <circle cx="1.5" cy="11" r="1.3" fill="#5a5a90"/>
  <circle cx="23" cy="11" r="1.3" fill="#5a5a90"/>
  <path d="M29.97,23.40 L33.34,23.39 L33.34,27.21 L29.97,27.20 L29.04,29.45 L31.43,31.82 L28.72,34.53 L26.35,32.14 L24.10,33.07 L24.11,36.44 L20.29,36.44 L20.30,33.07 L18.05,32.14 L15.68,34.53 L12.97,31.82 L15.36,29.45 L14.43,27.20 L11.06,27.21 L11.06,23.39 L14.43,23.40 L15.36,21.15 L12.97,18.78 L15.68,16.07 L18.05,18.46 L20.30,17.53 L20.29,14.16 L24.11,14.16 L24.10,17.53 L26.35,18.46 L28.72,16.07 L31.43,18.78 L29.04,21.15 Z" fill="#e2b83c" stroke="#c66e24" stroke-width="1.3"/>
  <circle cx="22.2" cy="25.3" r="6.2" fill="#e8c24a"/>
  <path d="M15,20 L19.5,18 L20.5,30 L16,31 Z" fill="#e8e080"/>
  <path d="M21,17 L24,17 L24.5,23 L21.5,23 Z" fill="#3f6a70"/>
 </g></svg>
<span style="left:53.1px;top:13.0px;font-size:26px;font-weight:normal;color:#fff;transform:scaleX(0.9293)">CFF Explorer VII - [BetaFast.exe]</span>
<span style="left:5.7px;top:66.0px;font-size:27px;font-weight:normal;color:#000;transform:scaleX(0.9146)">File</span>
<span style="left:74.1px;top:66.0px;font-size:27px;font-weight:normal;color:#000;transform:scaleX(0.9323)">Settings</span>
<span style="left:194.2px;top:66.0px;font-size:27px;font-weight:normal;color:#000;transform:scaleX(0.8077)">?</span>
<span style="left:522.1px;top:119.6px;font-size:22px;font-weight:bold;color:#000;transform:scaleX(1.0918)">BetaFast.exe</span>
<span style="left:75.0px;top:209.5px;font-size:26px;font-weight:bold;color:#0b2a5c;transform:scaleX(0.9841)">File: BetaFast.exe</span>
<span style="left:108.3px;top:246.0px;font-size:27px;font-weight:normal;color:#000;transform:scaleX(0.8521)">Dos Header</span>
<span style="left:108.3px;top:282.4px;font-size:27px;font-weight:normal;color:#000;transform:scaleX(0.8396)">Nt Headers</span>
<span style="left:141.3px;top:318.9px;font-size:27px;font-weight:normal;color:#000;transform:scaleX(0.8449)">File Header</span>
<span style="left:142.2px;top:355.4px;font-size:27px;font-weight:normal;color:#000;transform:scaleX(0.8393)">Optional Header</span>
<span style="left:176.3px;top:391.9px;font-size:27px;font-weight:normal;color:#000;transform:scaleX(0.8440)">Data Directories [x]</span>
<span style="left:109.2px;top:428.3px;font-size:27px;font-weight:normal;color:#000;transform:scaleX(0.8476)">Section Headers [x]</span>
<span style="left:108.4px;top:464.8px;font-size:27px;font-weight:normal;color:#000;transform:scaleX(0.8224)">Import Directory</span>
<span style="left:108.3px;top:501.3px;font-size:27px;font-weight:normal;color:#000;transform:scaleX(0.8406)">Resource Directory</span>
<span style="left:108.3px;top:537.7px;font-size:27px;font-weight:normal;color:#000;transform:scaleX(0.8402)">Relocation Directory</span>
<span style="left:108.3px;top:574.2px;font-size:27px;font-weight:normal;color:#000;transform:scaleX(0.8420)">Debug Directory</span>
<span style="left:108.3px;top:610.7px;font-size:27px;font-weight:normal;color:#000;transform:scaleX(0.8429)">.NET Directory</span>
<span style="left:141.3px;top:647.1px;font-size:27px;font-weight:normal;color:#000;transform:scaleX(0.8626)">MetaData Header</span>
<span style="left:141.3px;top:683.6px;font-size:27px;font-weight:normal;color:#000;transform:scaleX(0.8423)">MetaData Streams</span>
<span style="left:177.5px;top:720.1px;font-size:27px;font-weight:normal;color:#000;transform:scaleX(0.9500)">#~</span>
<span style="left:212.5px;top:756.5px;font-size:27px;font-weight:normal;color:#000;transform:scaleX(0.8534)">Tables Header</span>
<span style="left:212.5px;top:793.0px;font-size:27px;font-weight:normal;color:#000;transform:scaleX(0.8604)">Tables</span>
<span style="left:177.5px;top:829.5px;font-size:27px;font-weight:normal;color:#000;transform:scaleX(0.8418)">#Strings</span>
<span style="left:177.5px;top:866.0px;font-size:27px;font-weight:normal;color:#000;transform:scaleX(0.8654)">#US</span>
<span style="left:177.5px;top:902.4px;font-size:27px;font-weight:normal;color:#000;transform:scaleX(0.8689)">#GUID</span>
<span style="left:177.5px;top:938.9px;font-size:27px;font-weight:normal;color:#000;transform:scaleX(0.8456)">#Blob</span>
<span style="left:108.5px;top:975.4px;font-size:26px;font-weight:bold;color:#000;transform:scaleX(0.9605)">Address Converter</span>
<span style="left:108.5px;top:1011.8px;font-size:26px;font-weight:bold;color:#000;transform:scaleX(1.0069)">Dependency Walker</span>
<span style="left:108.5px;top:1048.3px;font-size:26px;font-weight:bold;color:#000;transform:scaleX(0.9884)">Hex Editor</span>
<span style="left:108.5px;top:1084.8px;font-size:26px;font-weight:bold;color:#000;transform:scaleX(0.9890)">Identifier</span>
<span style="left:108.5px;top:1121.2px;font-size:26px;font-weight:bold;color:#000;transform:scaleX(0.9640)">Import Adder</span>
<span style="left:108.5px;top:1157.7px;font-size:26px;font-weight:bold;color:#000;transform:scaleX(0.9617)">Quick Disassembler</span>
<span style="left:108.5px;top:1194.2px;font-size:26px;font-weight:bold;color:#000;transform:scaleX(0.9748)">Rebuilder</span>
<span style="left:108.5px;top:1230.7px;font-size:26px;font-weight:bold;color:#000;transform:scaleX(0.9805)">Resource Editor</span>
<span style="left:487.6px;top:175.6px;font-size:27px;font-weight:normal;color:#000;transform:scaleX(0.9460)">Property</span>
<span style="left:680.9px;top:175.6px;font-size:27px;font-weight:normal;color:#000;transform:scaleX(0.9076)">Value</span>
<span style="left:487.6px;top:229.2px;font-size:27px;font-weight:normal;color:#000;transform:scaleX(0.9375)">File Name</span>
<span style="left:679.5px;top:229.2px;font-size:27px;font-weight:normal;color:#000;transform:scaleX(0.9199)">C:\Program Files\BetaFast.exe</span>
<span style="left:487.7px;top:282.8px;font-size:27px;font-weight:normal;color:#000;transform:scaleX(0.8962)">File Type</span>
<span style="left:678.2px;top:282.8px;font-size:27px;font-weight:normal;color:#000;transform:scaleX(0.9115)">Portable Executable 32 .NET Assembly</span>
<span style="left:487.6px;top:336.4px;font-size:27px;font-weight:normal;color:#000;transform:scaleX(0.9495)">File Info</span>
<span style="left:678.0px;top:336.4px;font-size:27px;font-weight:normal;color:#000;transform:scaleX(0.9948)">No match found.</span>
<span style="left:487.8px;top:390.0px;font-size:27px;font-weight:normal;color:#000;transform:scaleX(0.8594)">File Size</span>
<span style="left:679.1px;top:390.0px;font-size:27px;font-weight:normal;color:#000;transform:scaleX(0.8904)">8.97 MB (9403904 bytes)</span>
<span style="left:487.9px;top:443.6px;font-size:27px;font-weight:normal;color:#000;transform:scaleX(0.8151)">PE Size</span>
<span style="left:679.1px;top:443.6px;font-size:27px;font-weight:normal;color:#000;transform:scaleX(0.8904)">8.97 MB (9403904 bytes)</span>
<span style="left:488.6px;top:497.1px;font-size:27px;font-weight:normal;color:#000;transform:scaleX(0.9138)">Created</span>
<span style="left:680.0px;top:497.1px;font-size:27px;font-weight:normal;color:#000;transform:scaleX(0.8690)">Tuesday 21 June 2022, 15.04.07</span>
<span style="left:487.5px;top:550.7px;font-size:27px;font-weight:normal;color:#000;transform:scaleX(1.0152)">Modified</span>
<span style="left:680.0px;top:550.7px;font-size:27px;font-weight:normal;color:#000;transform:scaleX(0.8690)">Tuesday 21 June 2022, 14.56.20</span>
<span style="left:489.5px;top:604.3px;font-size:27px;font-weight:normal;color:#000;transform:scaleX(0.8853)">Accessed</span>
<span style="left:680.0px;top:604.3px;font-size:27px;font-weight:normal;color:#000;transform:scaleX(0.8677)">Tuesday 21 June 2022, 15.04.25</span>
<span style="left:487.6px;top:657.9px;font-size:27px;font-weight:normal;color:#000;transform:scaleX(0.9667)">MD5</span>
<span style="left:680.0px;top:657.9px;font-size:27px;font-weight:normal;color:#000;transform:scaleX(0.8484)">47E2E35317A94FC73DC2C8E67C99FAA8</span>
<span style="left:488.6px;top:711.5px;font-size:27px;font-weight:normal;color:#000;transform:scaleX(0.9000)">SHA-1</span>
<span style="left:679.1px;top:711.5px;font-size:27px;font-weight:normal;color:#000;transform:scaleX(0.8554)">541994FA0584CE0BC4549CAA1E3195AEC32B9AB2</span>
<span style="left:487.1px;top:808.6px;font-size:27px;font-weight:normal;color:#000;transform:scaleX(0.9450)">Property</span>
<span style="left:747.0px;top:808.6px;font-size:27px;font-weight:normal;color:#000;transform:scaleX(0.8864)">Value</span>
<span style="left:486.5px;top:861.4px;font-size:27px;font-weight:normal;color:#000;transform:scaleX(0.9651)">Comments</span>
<span style="left:486.5px;top:915.0px;font-size:27px;font-weight:normal;color:#000;transform:scaleX(0.9597)">CompanyName</span>
<span style="left:485.6px;top:968.6px;font-size:27px;font-weight:normal;color:#000;transform:scaleX(0.9429)">FileDescription</span>
<span style="left:742.2px;top:968.6px;font-size:27px;font-weight:normal;color:#000;transform:scaleX(0.8774)">BetaFast</span>
<span style="left:485.7px;top:1022.2px;font-size:27px;font-weight:normal;color:#000;transform:scaleX(0.9000)">FileVersion</span>
<span style="left:742.3px;top:1022.2px;font-size:27px;font-weight:normal;color:#000;transform:scaleX(0.8625)">1.0.0.0</span>
<span style="left:485.6px;top:1075.8px;font-size:27px;font-weight:normal;color:#000;transform:scaleX(0.9623)">InternalName</span>
<span style="left:742.2px;top:1075.8px;font-size:27px;font-weight:normal;color:#000;transform:scaleX(0.8846)">BetaFast.exe</span>
<span style="left:485.6px;top:1129.3px;font-size:27px;font-weight:normal;color:#000;transform:scaleX(0.9583)">LegalCopyright</span>
<span style="left:743.0px;top:1129.3px;font-size:27px;font-weight:normal;color:#000;transform:scaleX(0.9583)">Copyright ©  2019</span>
<span style="left:485.7px;top:1182.9px;font-size:27px;font-weight:normal;color:#000;transform:scaleX(0.9102)">LegalTrademarks</span>
<span style="left:486.5px;top:1236.5px;font-size:27px;font-weight:normal;color:#000;transform:scaleX(0.9505)">OriginalFilename</span>
<span style="left:742.2px;top:1236.5px;font-size:27px;font-weight:normal;color:#000;transform:scaleX(0.8846)">BetaFast.exe</span>
<span style="left:485.6px;top:1290.1px;font-size:27px;font-weight:normal;color:#000;transform:scaleX(0.9722)">ProductName</span>
<span style="left:742.2px;top:1290.1px;font-size:27px;font-weight:normal;color:#000;transform:scaleX(0.8774)">BetaFast</span>
<span style="left:485.6px;top:1343.7px;font-size:27px;font-weight:normal;color:#000;transform:scaleX(0.9417)">ProductVersion</span>
<span style="left:742.3px;top:1343.7px;font-size:27px;font-weight:normal;color:#000;transform:scaleX(0.8625)">1.0.0.0</span>
</body></html>
